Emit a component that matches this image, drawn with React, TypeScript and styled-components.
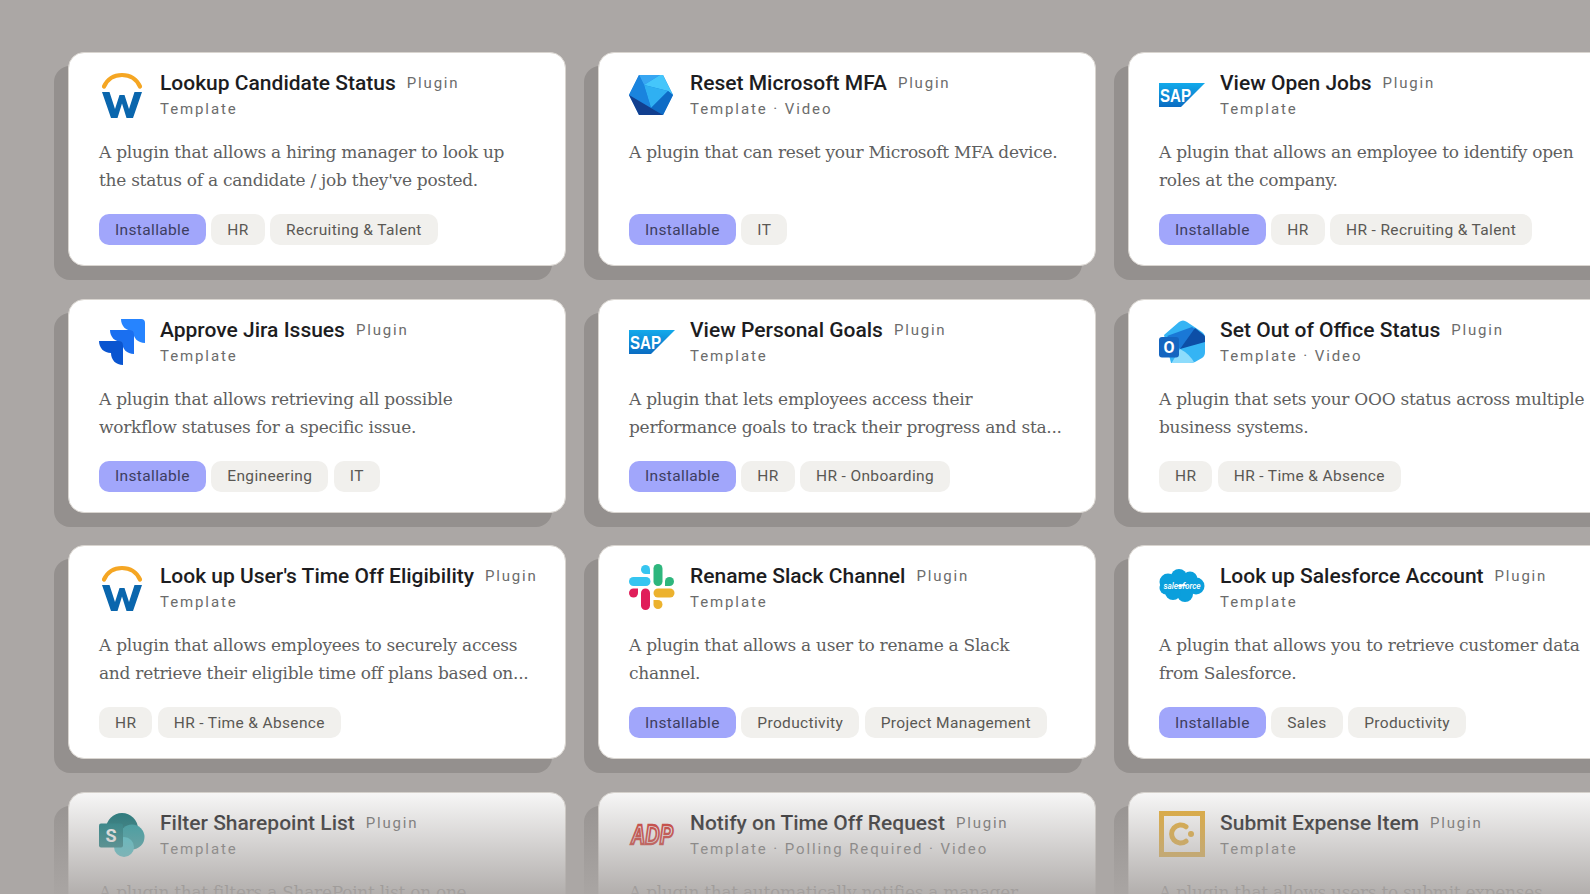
import React from 'react';
import styled, { createGlobalStyle } from 'styled-components';

const GlobalStyle = createGlobalStyle`
  html, body {
    margin: 0;
    padding: 0;
    height: 100%;
    overflow: hidden;
    background: #aba7a5;
  }
`;

const Page = styled.div`
  position: relative;
  width: 1590px;
  height: 894px;
  overflow: hidden;
  background: #aba7a5;
  padding: 52px 0 0 68px;
  box-sizing: border-box;
`;

const Grid = styled.div`
  display: grid;
  grid-template-columns: repeat(3, 498px);
  grid-auto-rows: 214px;
  column-gap: 32px;
  row-gap: 32.5px;
`;

const Fade = styled.div`
  position: absolute;
  left: 0;
  right: 0;
  top: 780px;
  height: 125px;
  background: linear-gradient(180deg, rgba(171, 167, 165, 0) 0%, #aba7a5 100%);
`;

const Card = styled.div`
  box-sizing: border-box;
  background: #fff;
  border: 1px solid #d9d5d0;
  border-radius: 16px;
  box-shadow: -14px 14px 0 0 #94908e;
  padding: 18px 20px 20px 30px;
  display: flex;
  flex-direction: column;
`;

const Head = styled.div`
  display: flex;
  gap: 15px;
  height: 48px;
`;

const LogoBox = styled.div`
  width: 46px;
  height: 46px;
  flex: none;
  svg {
    display: block;
    overflow: visible;
  }
`;

const TitleBlock = styled.div`
  display: flex;
  flex-direction: column;
  white-space: nowrap;
`;

const TitleRow = styled.div`
  display: flex;
  align-items: center;
  gap: 11px;
  height: 25px;
  line-height: 25px;
`;

const Title = styled.span`
  font-family: 'Roboto', 'Liberation Sans', sans-serif;
  font-size: 21px;
  font-weight: 500;
  color: #1d1d1f;
`;

const Kind = styled.span`
  font-family: 'Roboto', 'Liberation Sans', sans-serif;
  font-size: 15px;
  letter-spacing: 1.8px;
  color: #6c6c6c;
`;

const Meta = styled.div`
  font-family: 'Roboto', 'Liberation Sans', sans-serif;
  font-size: 15px;
  letter-spacing: 1.9px;
  color: #6c6c6c;
  margin-top: 3px;
  line-height: 20px;
`;

const Desc = styled.div`
  margin-top: 19px;
  height: 56px;
  font-family: 'DejaVu Serif', 'Liberation Serif', serif;
  font-size: 17px;
  letter-spacing: -0.27px;
  line-height: 28px;
  color: #5f5f5f;
  white-space: nowrap;
`;

const DescLine = styled.div``;

const Tags = styled.div`
  display: flex;
  gap: 5.5px;
  margin-top: 20px;
`;

const Tag = styled.span<{ $accent?: boolean }>`
  box-sizing: border-box;
  height: 31px;
  padding: 0 16px;
  display: flex;
  align-items: center;
  border-radius: 10px;
  font-family: 'Roboto', 'Liberation Sans', sans-serif;
  font-size: 15.5px;
  letter-spacing: 0.35px;
  color: ${({ $accent }) => ($accent ? '#3d3d60' : '#5a5854')};
  background: ${({ $accent }) => ($accent ? '#a1a6fb' : '#f1f0ed')};
`;

const S = 46;

const Svg = ({ children }: { children: React.ReactNode }) => (
  <svg width={S} height={S} viewBox="0 0 46 46">
    {children}
  </svg>
);

const Workday = () => (
  <Svg>
    <path d="M5 15.500C8.500 8 15 4 23 4s14.500 4 18 11.500" fill="none" stroke="#f5a623" strokeWidth="4.200" strokeLinecap="round" />
    <path d="M3 21h7.500L16 38l4.500-14h5L30 38l5.500-17H43l-9 26h-6.500L23 32.500 18.500 47H12z" fill="#0a66ad" />
  </Svg>
);

const Hexagon = () => (
  <Svg>
    <polygon points="10,4 34,4 44,24 34,44 10,44 0,24" fill="#1a7fdc" />
    <polygon points="10,4 31,4 15,14" fill="#37a6f2" />
    <polygon points="31,4 34,4 44,24 39,20 15,14" fill="#45c6fb" />
    <polygon points="15,14 39,20 22,37" fill="#2fb0f2" />
    <polygon points="39,20 44,24 34,44 22,37" fill="#0e6cc6" />
    <polygon points="0,24 10,4 15,14 22,37" fill="#1a84de" />
    <polygon points="0,24 22,37 34,44 10,44" fill="#123f8f" />
  </Svg>
);

const SapLogo = () => (
  <Svg>
    <defs>
      <linearGradient id="sapfill" x1="0" y1="0" x2="0" y2="1">
        <stop offset="0" stopColor="#12aaeb" />
        <stop offset="1" stopColor="#0a6cc2" />
      </linearGradient>
    </defs>
    <polygon points="0,12 46,12 22,36 0,36" fill="url(#sapfill)" />
    <text
      x="1"
      y="31"
      fontFamily="Liberation Sans, sans-serif"
      fontWeight="700"
      fontSize="19"
      textLength="31"
      lengthAdjust="spacingAndGlyphs"
      fill="#fff"
    >
      SAP
    </text>
  </Svg>
);

const JiraPiece = ({ x, y, color }: { x: number; y: number; color: string }) => (
  <path
    transform={`translate(${x} ${y})`}
    d="M0 0H20Q24 0 24 4V24C17 24 12 19 12 12C5 12 0 7 0 0Z"
    fill={color}
  />
);

const Jira = () => (
  <Svg>
    <JiraPiece x={22} y={1} color="#2684ff" />
    <JiraPiece x={11} y={12} color="#1a6ff0" />
    <JiraPiece x={0} y={23} color="#0a55d0" />
  </Svg>
);

const Outlook = () => (
  <Svg>
    <defs>
      <clipPath id="outlookbody">
        <path d="M5 17 20 4q4-3 8 0l15 10q3 2 3 6v14q0 4-3 6l-7 4q-2 1-6 1H12z" />
      </clipPath>
    </defs>
    <g clipPath="url(#outlookbody)">
      <rect width="46" height="46" fill="#35b4f4" />
      <polygon points="8,18 33,9 46,18 21,31" fill="#1a78d6" />
      <polygon points="36,10 46,18 46,24 21,31" fill="#0d4ea6" />
      <path d="M12 46 21 31q10 5 15 15z" fill="#8ddcfc" />
    </g>
    <rect x="0" y="19" width="20" height="20.500" rx="3" fill="#1565c0" />
    <text x="10" y="35" textAnchor="middle" fontFamily="Roboto, sans-serif" fontWeight="700" fontSize="16" fill="#fff">
      O
    </text>
  </Svg>
);

const Slack = () => (
  <Svg>
    <rect x="0" y="13" width="21.500" height="9" rx="4.500" fill="#36c5f0" />
    <path d="M21 10H16.500A4.500 4.500 0 1 1 21 5.500Z" fill="#36c5f0" />
    <rect x="24.500" y="0" width="9" height="22" rx="4.500" fill="#2eb67d" />
    <path d="M36 22V17.500A4.500 4.500 0 1 1 40.500 22Z" fill="#2eb67d" />
    <path d="M9 24.500V29A4.500 4.500 0 1 1 4.500 24.500Z" fill="#e01e5a" />
    <rect x="12" y="24.500" width="9" height="21.500" rx="4.500" fill="#e01e5a" />
    <rect x="24.500" y="24.500" width="21" height="9" rx="4.500" fill="#ecb22e" />
    <path d="M24.500 36H29A4.500 4.500 0 1 1 24.500 40.500Z" fill="#ecb22e" />
  </Svg>
);

const Salesforce = () => (
  <Svg>
    <g fill="#0b9fdc">
      <circle cx="9" cy="18" r="8.500" />
      <circle cx="20" cy="13" r="8" />
      <circle cx="31" cy="15" r="7.500" />
      <circle cx="37" cy="22" r="8.500" />
      <circle cx="26" cy="30" r="8" />
      <circle cx="14" cy="28" r="8" />
      <circle cx="7" cy="24" r="6.500" />
    </g>
    <text x="23" y="24.500" textAnchor="middle" fontFamily="Roboto, sans-serif" fontStyle="italic" fontWeight="500" fontSize="8.200" fill="#fff">
      salesforce
    </text>
  </Svg>
);

const SharePoint = () => (
  <Svg>
    <circle cx="23" cy="18" r="16" fill="#036c70" />
    <circle cx="33" cy="26" r="12.500" fill="#1a9ba1" />
    <circle cx="25" cy="36" r="10" fill="#37c6d0" />
    <rect x="0" y="12.500" width="24" height="24" rx="2" fill="#03787c" />
    <text x="12" y="31" textAnchor="middle" fontFamily="Roboto, sans-serif" fontWeight="700" fontSize="18" fill="#fff">
      S
    </text>
  </Svg>
);

const Adp = () => (
  <Svg>
    <text
      x="2"
      y="33"
      fontFamily="Liberation Sans, sans-serif"
      fontStyle="italic"
      fontWeight="700"
      fontSize="27"
      textLength="42"
      lengthAdjust="spacingAndGlyphs"
      fill="none"
      stroke="#d4251d"
      strokeWidth="2.300"
    >
      ADP
    </text>
  </Svg>
);

const Expense = () => (
  <Svg>
    <rect x="2.500" y="2.500" width="41" height="41" fill="none" stroke="#e8ac2c" strokeWidth="5" />
    <path d="M27 15.800a9 9 0 1 0 0 14.400" fill="none" stroke="#e8ac2c" strokeWidth="5" strokeLinecap="round" />
    <circle cx="32" cy="23" r="3" fill="#e8ac2c" />
  </Svg>
);

type Plugin = {
  logo: React.ComponentType;
  title: string;
  meta: string;
  lines: string[];
  tags: string[];
  installable?: boolean;
};

const plugins: Plugin[] = [
  { logo: Workday, title: 'Lookup Candidate Status', meta: 'Template', lines: ['A plugin that allows a hiring manager to look up', "the status of a candidate / job they've posted."], tags: ['HR', 'Recruiting & Talent'], installable: true },
  { logo: Hexagon, title: 'Reset Microsoft MFA', meta: 'Template · Video', lines: ['A plugin that can reset your Microsoft MFA device.'], tags: ['IT'], installable: true },
  { logo: SapLogo, title: 'View Open Jobs', meta: 'Template', lines: ['A plugin that allows an employee to identify open', 'roles at the company.'], tags: ['HR', 'HR - Recruiting & Talent'], installable: true },
  { logo: Jira, title: 'Approve Jira Issues', meta: 'Template', lines: ['A plugin that allows retrieving all possible', 'workflow statuses for a specific issue.'], tags: ['Engineering', 'IT'], installable: true },
  { logo: SapLogo, title: 'View Personal Goals', meta: 'Template', lines: ['A plugin that lets employees access their', 'performance goals to track their progress and sta...'], tags: ['HR', 'HR - Onboarding'], installable: true },
  { logo: Outlook, title: 'Set Out of Office Status', meta: 'Template · Video', lines: ['A plugin that sets your OOO status across multiple', 'business systems.'], tags: ['HR', 'HR - Time & Absence'] },
  { logo: Workday, title: "Look up User's Time Off Eligibility", meta: 'Template', lines: ['A plugin that allows employees to securely access', 'and retrieve their eligible time off plans based on...'], tags: ['HR', 'HR - Time & Absence'] },
  { logo: Slack, title: 'Rename Slack Channel', meta: 'Template', lines: ['A plugin that allows a user to rename a Slack', 'channel.'], tags: ['Productivity', 'Project Management'], installable: true },
  { logo: Salesforce, title: 'Look up Salesforce Account', meta: 'Template', lines: ['A plugin that allows you to retrieve customer data', 'from Salesforce.'], tags: ['Sales', 'Productivity'], installable: true },
  { logo: SharePoint, title: 'Filter Sharepoint List', meta: 'Template', lines: ['A plugin that filters a SharePoint list on one'], tags: [] },
  { logo: Adp, title: 'Notify on Time Off Request', meta: 'Template · Polling Required · Video', lines: ['A plugin that automatically notifies a manager'], tags: [] },
  { logo: Expense, title: 'Submit Expense Item', meta: 'Template', lines: ['A plugin that allows users to submit expenses'], tags: [] },
];

const PluginCard = ({ plugin }: { plugin: Plugin }) => {
  const Logo = plugin.logo;
  return (
    <Card>
      <Head>
        <LogoBox>
          <Logo />
        </LogoBox>
        <TitleBlock>
          <TitleRow>
            <Title>{plugin.title}</Title>
            <Kind>Plugin</Kind>
          </TitleRow>
          <Meta>{plugin.meta}</Meta>
        </TitleBlock>
      </Head>
      <Desc>
        {plugin.lines.map((line) => (
          <DescLine key={line}>{line}</DescLine>
        ))}
      </Desc>
      <Tags>
        {plugin.installable && <Tag $accent>Installable</Tag>}
        {plugin.tags.map((tag) => (
          <Tag key={tag}>{tag}</Tag>
        ))}
      </Tags>
    </Card>
  );
};

const App = () => (
  <>
    <GlobalStyle />
    <Page>
      <Grid>
        {plugins.map((plugin) => (
          <PluginCard key={plugin.title} plugin={plugin} />
        ))}
      </Grid>
      <Fade />
    </Page>
  </>
);

export default App;
